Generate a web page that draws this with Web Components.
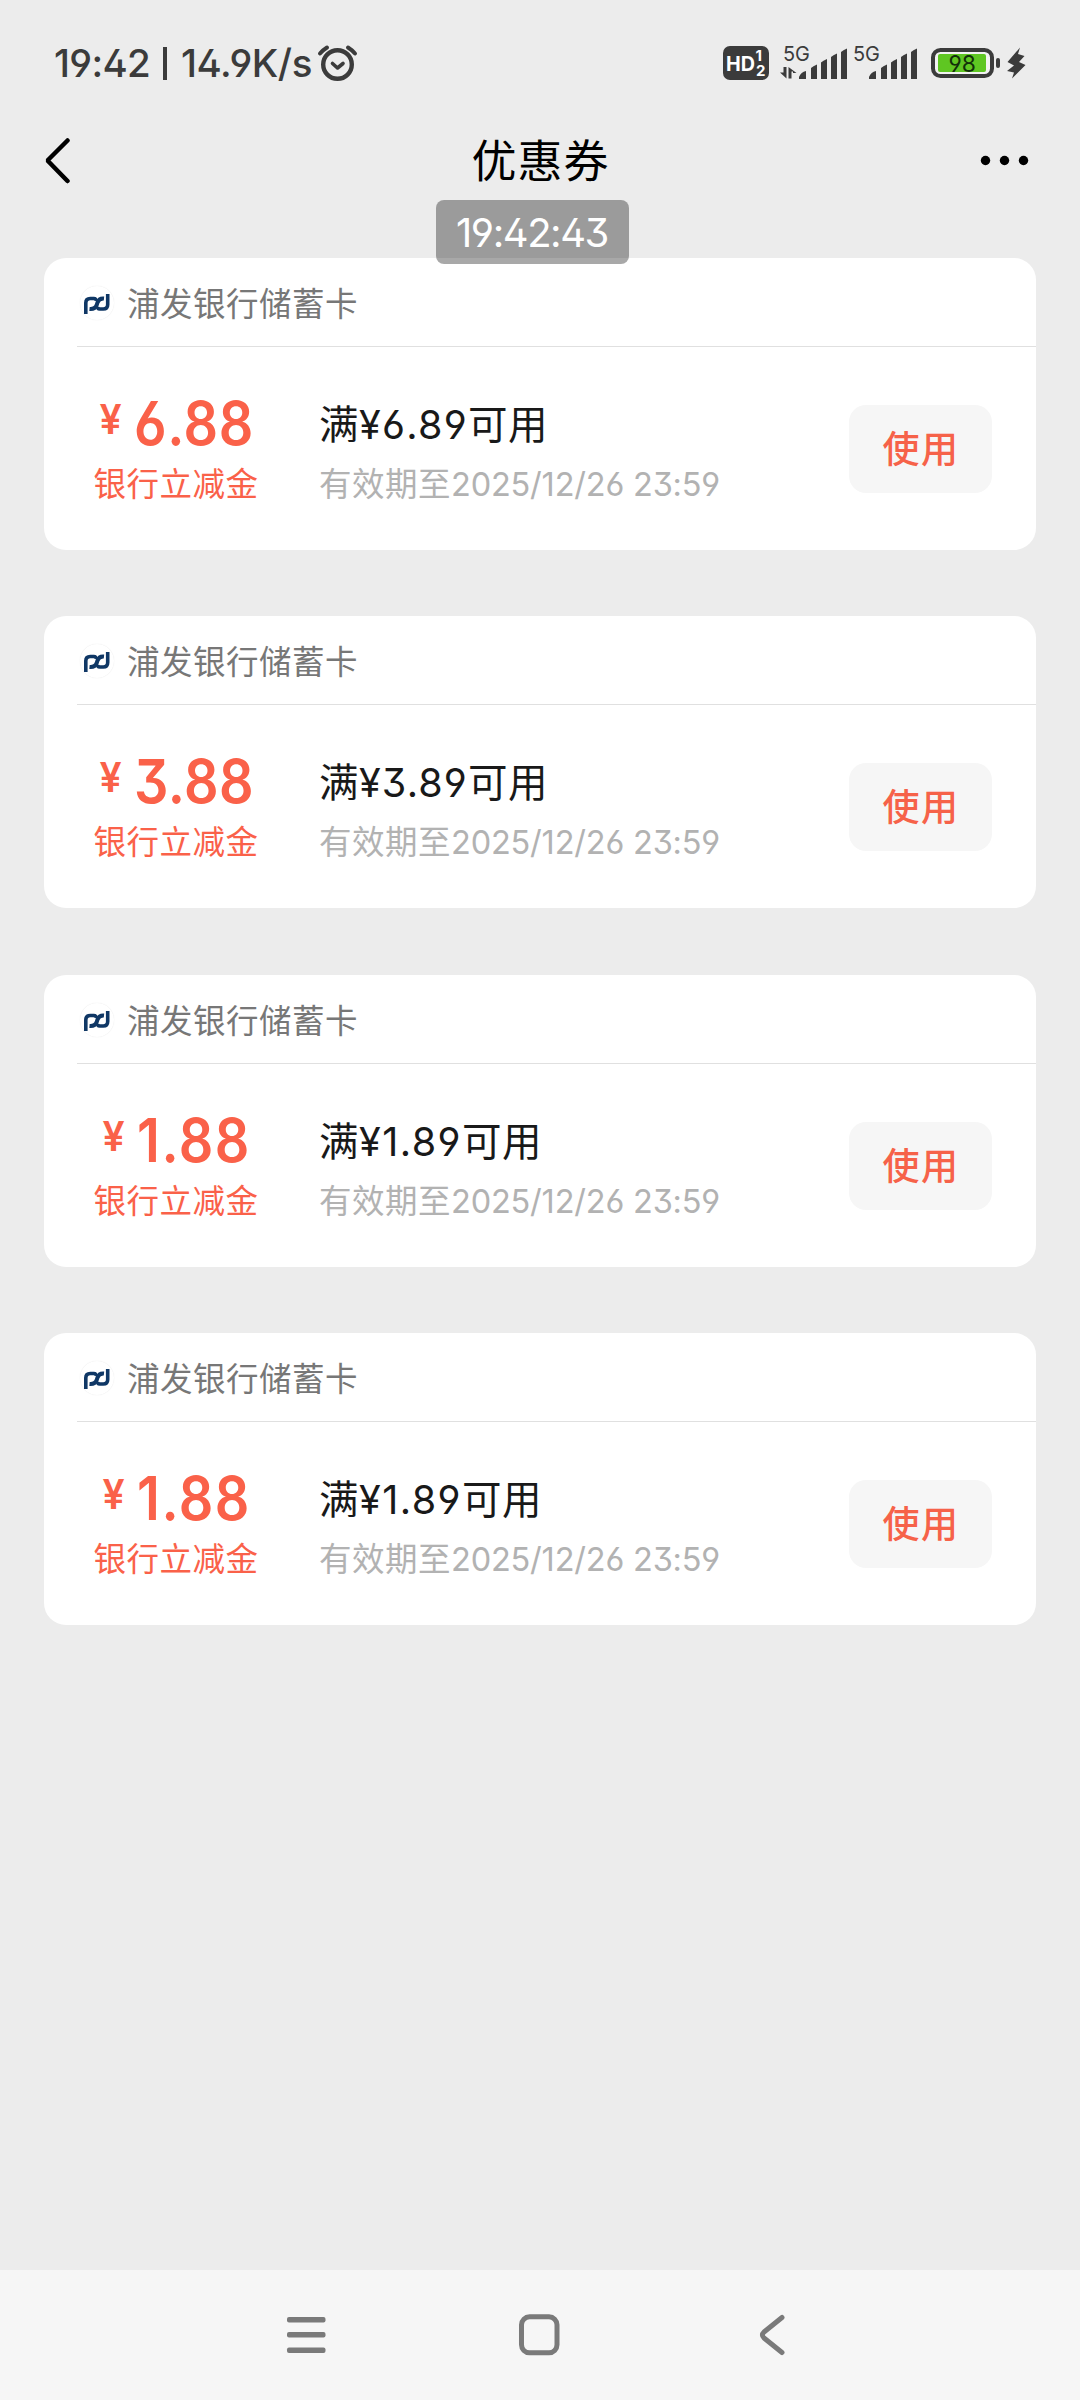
<!DOCTYPE html>
<html lang="zh-CN">
<head>
<meta charset="utf-8">
<title>优惠券</title>
<style>
html,body{margin:0;padding:0;background:#ececec}
body{font-family:Inter,"Noto Sans CJK SC",sans-serif;font-feature-settings:"ss01","cv03","cv04"}
</style>
</head>
<body>
<coupon-page></coupon-page>
<script>
const define = (name, html, setup) => customElements.define(name, class extends HTMLElement {
  connectedCallback() {
    if (this.shadowRoot) return;
    this.attachShadow({ mode: 'open' }).innerHTML = typeof html === 'function' ? html(this) : html;
    if (setup) setup(this);
  }
});

/* Text that spreads its letters over a fixed advance width; sx condenses the glyphs. */
define('fit-text', el => `<style>:host{display:inline-block;white-space:pre;width:${el.getAttribute('w')}px}span{display:inline-block;transform-origin:0 50%}</style><span>${el.getAttribute('t')}</span>`, el => {
  const s = el.shadowRoot.querySelector('span');
  const n = s.textContent.length;
  const sx = Number(el.getAttribute('sx') || 1);
  s.style.letterSpacing = '0px';
  const gap = (Number(el.getAttribute('w')) / sx - s.getBoundingClientRect().width) / n;
  s.style.letterSpacing = gap + 'px';
  if (sx !== 1) s.style.transform = `scaleX(${sx})`;
});

define('status-bar', `<style>
:host{display:flex;height:120px;box-sizing:border-box;padding:39px 52px 33px 54px;justify-content:space-between;align-items:center;color:#3b3b3b}
.l{display:flex;align-items:center;height:48px;font-size:38.5px;line-height:48px;font-weight:500}
.bar{width:4px;height:33px;background:#3b3b3b;margin:0 14px 0 13px}
svg{display:block;overflow:visible}
text{font-family:Inter,sans-serif}
</style>
<div class="l"><fit-text w="96" t="19:42"></fit-text><i class="bar"></i><fit-text w="131" t="14.9K/s"></fit-text>
<svg width="44" height="40" viewBox="-1 0 44 40" fill="none" stroke="#3b3b3b" stroke-linecap="round"><circle cx="24.500" cy="21.500" r="14.300" stroke-width="4.400"/><path d="M19.500 20.500l5 4.500 5.500-4.500" stroke-width="3.600" stroke-linejoin="round"/><path d="M7 10.500q3-3.500 7-6M42 10.500q-3-3.500-7-6" stroke-width="4"/></svg></div>
<svg width="308" height="56" viewBox="720 35 308 56" fill="#3b3b3b">
<rect x="723" y="46" width="46" height="34" rx="7"/>
<g fill="#fff" font-weight="700"><text x="726" y="71" font-size="20" textLength="29" lengthAdjust="spacingAndGlyphs">HD</text><text x="755.500" y="61" font-size="15">1</text><text x="756" y="76" font-size="15">2</text></g>
<g font-size="20.500"><text x="783" y="61" textLength="27" lengthAdjust="spacingAndGlyphs">5G</text><text x="853" y="61" textLength="27" lengthAdjust="spacingAndGlyphs">5G</text></g>
<path d="M780 72.500h3.500V67h3v11.500zM788.500 67l8 6h-3.500v-1.500h-1.500v7h-3z"/>
<g id="b"><path d="M799 79v-2q2-5 7-6v8zM811 79V68q2-2 6-3.500V79zM821 79V62.500q2-2 6-3.500v20zM831 79V57q2-2 6-3.500V79zM841 79V52q2-2 6-3.500V79z"/></g>
<use href="#b" x="70"/>
<rect x="933" y="50" width="59" height="26" rx="7.500" fill="#f2f2f2" stroke="#3b3b3b" stroke-width="4"/>
<rect x="938" y="54" width="48" height="18" rx="2" fill="#5fc622"/>
<text x="948.500" y="71.500" font-size="23.500" fill="#12300a" textLength="27.500" lengthAdjust="spacingAndGlyphs">98</text>
<rect x="996" y="58" width="4" height="10" rx="2"/>
<path d="M1020 47.500l-12.500 14.500 6.500 3.500-7 5.500 7 1.500-2 6 13.500-13.500-6.500-3 5.500-6-6.500-2z"/>
</svg>`);

define('page-header', `<style>
:host{display:flex;height:138px;padding:17px 50px 0 40px;box-sizing:border-box;justify-content:space-between;align-items:flex-start;position:relative}
svg{display:block}
h1{margin:0 0 0 31px;font-size:45px;letter-spacing:1px;font-weight:400;line-height:49px;color:#000}
.toast{position:absolute;left:436px;top:80px;width:193px;height:64px;box-sizing:border-box;padding-left:20px;border-radius:8px;background:rgba(0,0,0,.34);color:#fff;font-size:40px;line-height:66px}
</style>
<svg width="30" height="48" fill="none" stroke="#000" stroke-width="4.500" stroke-linecap="round" stroke-linejoin="bevel"><path d="M27.500 3.500L7.500 23.500l20 20.500"/></svg>
<h1>优惠券</h1>
<svg width="50" height="48"><circle cx="5.500" cy="23.500" r="4.700"/><circle cx="24.500" cy="23.500" r="4.700"/><circle cx="43.500" cy="23.500" r="4.700"/></svg>
<div class="toast"><fit-text w="152" t="19:42:43"></fit-text></div>`);

define('bank-logo', `<style>:host{display:block;width:34px;height:34px;border-radius:50%;box-shadow:0 0 1px rgba(0,0,0,.13);flex:none}svg{display:block}</style>
<svg width="34" height="34" viewBox="0 0 34 34" fill="none" stroke="#0f3765" stroke-width="3.600"><path d="M5.800 28V17q0-4.500 4.500-4.500h3.500q2.500 0 1.800 2.500"/><path d="M27.700 8v10.500q0 4.500-4.500 4.500h-3.500q-2.500 0-1.800-2.500"/><path stroke-width="4" d="M24 12.500q-5-.5-6.500 4l-.8 2.500q-1.700 4.500-7.200 4"/></svg>`);

define('use-button', `<style>
:host{display:block}
button{display:block;width:143px;height:88px;border:0;border-radius:17px;background:#f6f6f6;color:#f66249;font:500 37px/84px "Noto Sans CJK SC",sans-serif;letter-spacing:1.500px;padding:0 0 4px 1px}
</style><button><slot></slot></button>`);

define('coupon-card', el => {
  const v = el.getAttribute('amount'), m = el.getAttribute('min'), one = v[0] === '1';
  return `<style>
:host{display:block;width:992px;height:292px;border-radius:22px;background:#fff;overflow:hidden}
.bank{display:flex;align-items:center;height:89px;margin-left:33px;padding:2px 0 0 3px;box-sizing:border-box;border-bottom:1px solid #e0e0e0;font-size:32.500px;letter-spacing:.5px;color:#777}
.bank span{margin:-3px 0 0 13px}
.body{display:flex;height:203px}
.value{width:264px;flex:none;display:flex;flex-direction:column;align-items:center;color:#fa6149}
.amount{display:flex;height:60px;margin-top:46px;line-height:60px;font-size:60px;font-weight:600}
.yen{font-size:41px;line-height:52px;margin-right:10px;width:26px;display:flex;justify-content:center}
.yen b{font-weight:600;transform:scaleX(.96)}
.kind{font-size:32.500px;letter-spacing:.5px;line-height:46px;margin-top:9px;white-space:nowrap}
.terms{flex:1;margin-left:11px}
.cond{font-size:39.500px;letter-spacing:.5px;line-height:60px;margin-top:48px;color:#191919;white-space:nowrap;display:flex}
.date{font-size:32.500px;letter-spacing:.5px;line-height:46px;margin-top:7px;color:#b2b2b2;white-space:nowrap;display:flex}
.num{letter-spacing:0}
use-button{margin:58px 44px 0 0}
</style>
<div class="bank"><bank-logo></bank-logo><span>浦发银行储蓄卡</span></div>
<div class="body">
<div class="value"><div class="amount"><span class="yen"><b>¥</b></span><fit-text sx=".9" w="${one ? 114 : 120}" t="${v}"></fit-text></div><div class="kind">银行立减金</div></div>
<div class="terms"><div class="cond">满<fit-text class="num" w="${one ? 103 : 109}" t="¥${m}"></fit-text>可用</div><div class="date">有效期至<fit-text class="num" w="269" t="2025/12/26 23:59"></fit-text></div></div>
<use-button>使用</use-button>
</div>`;
});

define('nav-bar', `<style>:host{display:flex;height:130px;background:#f6f6f6;align-items:flex-start;padding:40px 291px 0 282px;justify-content:space-between;box-sizing:border-box}svg{display:block}</style>
<svg width="48" height="50" fill="#7a7a7a"><rect x="5" y="7" width="38.500" height="5.500" rx="2"/><rect x="5" y="22" width="38.500" height="5.500" rx="2"/><rect x="5" y="37.500" width="38.500" height="5.500" rx="2"/></svg>
<svg width="50" height="50" fill="none" stroke="#7a7a7a" stroke-width="5"><rect x="6.500" y="6.800" width="35.500" height="36" rx="8"/></svg>
<svg width="40" height="50" fill="none" stroke="#7a7a7a" stroke-width="5" stroke-linecap="round" stroke-linejoin="round"><path d="M33 7.500L15 22q-3.200 3 0 6l18 14.500"/></svg>`);

define('coupon-page', `<style>
:host{display:flex;flex-direction:column;width:1080px;height:2400px;background:#ececec;overflow:hidden}
main{flex:1;display:flex;flex-direction:column;gap:66.330px;padding:0 44px}
</style>
<status-bar></status-bar>
<page-header></page-header>
<main>
<coupon-card amount="6.88" min="6.89"></coupon-card>
<coupon-card amount="3.88" min="3.89"></coupon-card>
<coupon-card amount="1.88" min="1.89"></coupon-card>
<coupon-card amount="1.88" min="1.89"></coupon-card>
</main>
<nav-bar></nav-bar>`);
</script>
</body>
</html>
